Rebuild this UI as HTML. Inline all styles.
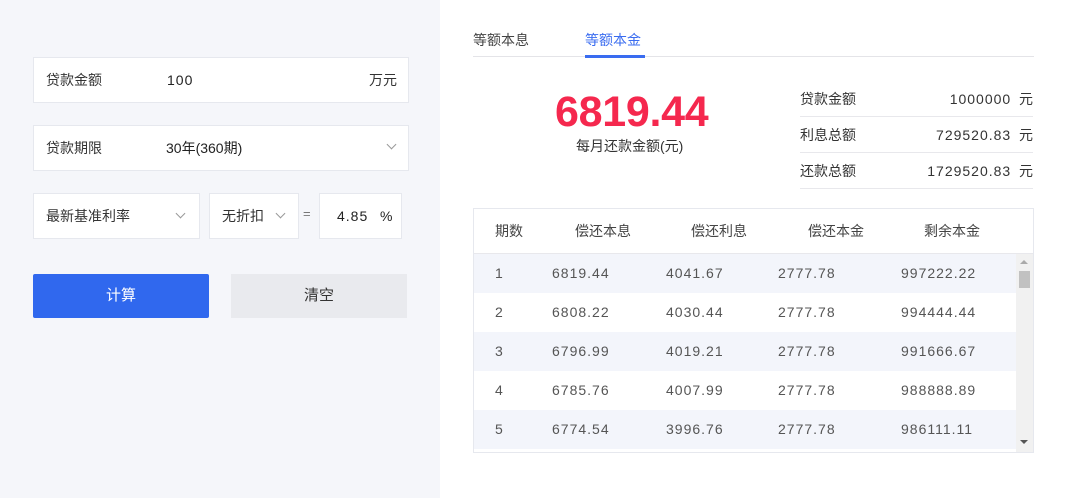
<!DOCTYPE html>
<html><head><meta charset="utf-8"><style>
*{margin:0;padding:0;box-sizing:border-box}
body{width:1066px;height:498px;position:relative;overflow:hidden;background:#fff;font-family:"Liberation Sans","Noto Sans CJK SC",sans-serif;color:#333;font-size:14px}
.left{position:absolute;left:0;top:0;width:440px;height:498px;background:#f5f6fa}
.box{position:absolute;background:#fff;border:1px solid #e6e8ee;height:46px;line-height:44px}
.abs{position:absolute}
.chev{position:absolute;width:7px;height:7px;border-right:1.5px solid #999;border-bottom:1.5px solid #999;transform:rotate(45deg)}
.btn{position:absolute;height:44px;line-height:44px;text-align:center;font-size:15px}
.tab{position:absolute;top:30px;font-size:14px}
.row{position:absolute;left:0;width:542px;height:39px;line-height:39px;color:#555}
.row span,.hd span{position:absolute}
.row span{letter-spacing:1px}
.sum{position:absolute;left:800px;width:233px;height:36px;line-height:36px;border-bottom:1px solid #e8e8ec}
.n{letter-spacing:1px}
</style></head><body>
<div class="left"></div>
<div class="box" style="left:33px;top:57px;width:376px"><span class="abs" style="left:12px">贷款金额</span><span class="abs n" style="left:133px;color:#222">100</span><span class="abs" style="right:11px">万元</span></div>
<div class="box" style="left:33px;top:125px;width:376px"><span class="abs" style="left:12px">贷款期限</span><span class="abs" style="left:132px;color:#222">30年(360期)</span><div class="chev" style="left:354px;top:15px"></div></div>
<div class="box" style="left:33px;top:193px;width:167px"><span class="abs" style="left:12px">最新基准利率</span><div class="chev" style="left:143px;top:16px"></div></div>
<div class="box" style="left:209px;top:193px;width:90px"><span class="abs" style="left:12px">无折扣</span><div class="chev" style="left:67px;top:16px"></div></div>
<span class="abs" style="left:303px;top:206px;color:#777;font-size:13px">=</span>
<div class="box" style="left:319px;top:193px;width:83px"><span class="abs n" style="left:17px;color:#222">4.85</span><span class="abs" style="left:60px;color:#222">%</span></div>
<div class="btn" style="left:33px;top:274px;width:176px;background:#3068ee;color:#fff;border-radius:2px">计算</div>
<div class="btn" style="left:231px;top:274px;width:176px;background:#e9eaee;color:#333">清空</div>

<div class="tab" style="left:473px;color:#444">等额本息</div>
<div class="tab" style="left:585px;color:#3a6cf0">等额本金</div>
<div class="abs" style="left:473px;top:56px;width:561px;height:1px;background:#e4e4e8"></div>
<div class="abs" style="left:585px;top:55px;width:60px;height:3px;background:#3a6cf0"></div>

<div class="abs" style="left:555px;top:88px;font-size:43px;font-weight:bold;color:#f5284e;letter-spacing:-0.3px">6819.44</div>
<div class="abs" style="left:576px;top:136px;font-size:14px;color:#333">每月还款金额(元)</div>

<div class="sum" style="top:81px"><span class="abs" style="left:0">贷款金额</span><span class="abs" style="right:0"><span class="n">1000000</span> &nbsp;元</span></div>
<div class="sum" style="top:117px"><span class="abs" style="left:0">利息总额</span><span class="abs" style="right:0"><span class="n">729520.83</span> &nbsp;元</span></div>
<div class="sum" style="top:153px"><span class="abs" style="left:0">还款总额</span><span class="abs" style="right:0"><span class="n">1729520.83</span> &nbsp;元</span></div>

<div class="abs" style="left:473px;top:208px;width:561px;height:245px;border:1px solid #e6e8ee;overflow:hidden">
 <div class="hd abs" style="left:0;top:0;width:559px;height:45px;line-height:45px;border-bottom:1px solid #e8e8ec;color:#444">
  <span style="left:21px">期数</span><span style="left:101px">偿还本息</span><span style="left:217px">偿还利息</span><span style="left:334px">偿还本金</span><span style="left:450px">剩余本金</span>
 </div>
 <div class="row" style="top:45px;background:#f3f5fb"><span style="left:21px">1</span><span style="left:78px">6819.44</span><span style="left:192px">4041.67</span><span style="left:304px">2777.78</span><span style="left:427px">997222.22</span></div>
 <div class="row" style="top:84px"><span style="left:21px">2</span><span style="left:78px">6808.22</span><span style="left:192px">4030.44</span><span style="left:304px">2777.78</span><span style="left:427px">994444.44</span></div>
 <div class="row" style="top:123px;background:#f3f5fb"><span style="left:21px">3</span><span style="left:78px">6796.99</span><span style="left:192px">4019.21</span><span style="left:304px">2777.78</span><span style="left:427px">991666.67</span></div>
 <div class="row" style="top:162px"><span style="left:21px">4</span><span style="left:78px">6785.76</span><span style="left:192px">4007.99</span><span style="left:304px">2777.78</span><span style="left:427px">988888.89</span></div>
 <div class="row" style="top:201px;background:#f3f5fb"><span style="left:21px">5</span><span style="left:78px">6774.54</span><span style="left:192px">3996.76</span><span style="left:304px">2777.78</span><span style="left:427px">986111.11</span></div>
 <div class="abs" style="left:542px;top:45px;width:17px;height:200px;background:#f1f1f1"></div>
 <div class="abs" style="left:546px;top:51px;width:0;height:0;border-left:4px solid transparent;border-right:4px solid transparent;border-bottom:4px solid #aaa"></div>
 <div class="abs" style="left:545px;top:62px;width:11px;height:17px;background:#c1c1c1"></div>
 <div class="abs" style="left:546px;top:231px;width:0;height:0;border-left:4px solid transparent;border-right:4px solid transparent;border-top:4px solid #555"></div>
</div>
</body></html>
